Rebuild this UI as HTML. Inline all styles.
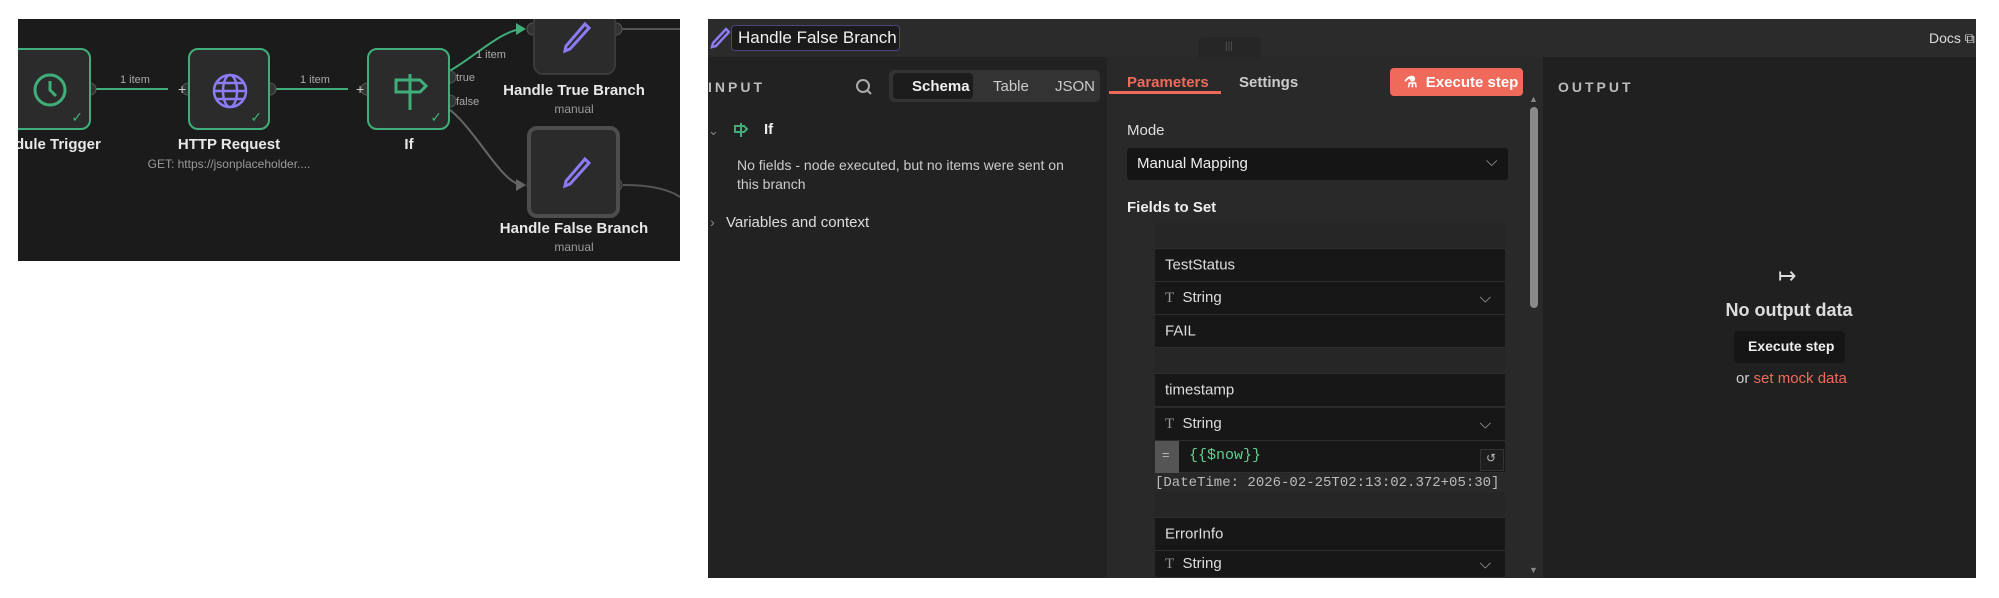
<!DOCTYPE html>
<html><head><meta charset="utf-8"><style>
*{box-sizing:border-box;margin:0;padding:0}
body{width:1999px;height:598px;background:#fff;position:relative;overflow:hidden;font-family:"Liberation Sans",sans-serif;color:#e0e0e0}
.a{position:absolute}
.t{position:absolute;white-space:nowrap}
.node{position:absolute;background:#2b2b2b;border:2px solid #3fae7a;border-radius:10px}
.lbl{position:absolute;font-size:15px;font-weight:bold;color:#e8e8e8;text-align:center;white-space:nowrap;transform:translateX(-50%)}
.sub{position:absolute;font-size:12px;color:#9a9a9a;white-space:nowrap;transform:translateX(-50%)}
.row{position:absolute;left:1155px;width:350px;background:#171717;border-bottom:1px solid #2e2e2e;font-size:15px;color:#ddd}
.row span{position:absolute;left:10px;top:50%;transform:translateY(-50%)}
.chev{position:absolute;right:14px;top:50%;transform:translateY(-50%)}
</style></head><body>

<!-- canvas -->
<div class="a" style="left:18px;top:19px;width:662px;height:242px;background:#1b1b1b;overflow:hidden">
<svg class="a" style="left:0;top:0" width="662" height="242">
 <g fill="none" stroke-width="2">
  <path d="M55 70 H150" stroke="#3fae7a"/>
  <path d="M232 70 H330" stroke="#3fae7a"/>
  <path d="M415 58 C440 55,480 10,505 10" stroke="#3fae7a"/>
  <path d="M415 82 C450 90,480 166,505 166" stroke="#666"/>
  <path d="M600 10 H662" stroke="#555"/>
  <path d="M605 166 C630 166,650 170,662 178" stroke="#555"/>
 </g>
 <path d="M498 4 L508 10 L498 16Z" fill="#3fae7a"/>
 <path d="M498 160 L508 166 L498 172Z" fill="#666"/>
 <g fill="#333" stroke="#555"><circle cx="72" cy="70" r="6"/><circle cx="170" cy="70" r="6"/><circle cx="252" cy="70" r="6"/><circle cx="349" cy="70" r="6"/><circle cx="432" cy="58" r="6"/><circle cx="432" cy="82" r="6"/><circle cx="515" cy="10" r="6"/><circle cx="598" cy="10" r="6"/><circle cx="515" cy="166" r="6"/><circle cx="598" cy="166" r="6"/></g>
 <text x="160" y="75" fill="#ccc" font-size="14" font-family="Liberation Sans">+</text>
 <text x="338" y="75" fill="#ccc" font-size="14" font-family="Liberation Sans">+</text>
 <g fill="#aaa" font-size="11" font-family="Liberation Sans"><text x="102" y="64">1 item</text><text x="282" y="64">1 item</text><text x="458" y="39">1 item</text><text x="438" y="62">true</text><text x="438" y="86">false</text></g>
</svg>
<div class="node" style="left:-10px;top:29px;width:83px;height:82px"><svg class="a" style="left:22px;top:22px" width="36" height="36" fill="none" stroke="#3fae7a" stroke-width="3"><circle cx="18" cy="18" r="15"/><path d="M18 9 V18 L24 24"/></svg><span class="t" style="right:6px;bottom:2px;color:#3fae7a;font-size:14px">✓</span></div>
<div class="node" style="left:170px;top:29px;width:82px;height:82px"><svg class="a" style="left:21px;top:22px" width="38" height="38" fill="none" stroke="#8b7cf6" stroke-width="2.5"><circle cx="19" cy="19" r="16"/><ellipse cx="19" cy="19" rx="7" ry="16"/><path d="M3 19 H35 M6 11 H32 M6 27 H32"/></svg><span class="t" style="right:6px;bottom:2px;color:#3fae7a;font-size:14px">✓</span></div>
<div class="node" style="left:349px;top:29px;width:83px;height:82px"><svg class="a" style="left:23px;top:22px" width="36" height="40" fill="none" stroke="#3fae7a" stroke-width="3"><path d="M18 2 V38 M4 8 H28 L34 14 L28 20 H4Z"/></svg><span class="t" style="right:6px;bottom:2px;color:#3fae7a;font-size:14px">✓</span></div>
<div class="node" style="left:515px;top:-20px;width:83px;height:76px;border-color:#3a3a3a"><svg class="a" style="left:26px;top:20px" width="30" height="34" fill="none" stroke="#8b7cf6" stroke-width="3"><path d="M24 3 L28 7 L9 28 L4 30 L5 25Z"/></svg></div>
<div class="node" style="left:509px;top:107px;width:93px;height:92px;border:4px solid #4d4d4d"><svg class="a" style="left:30px;top:26px" width="30" height="34" fill="none" stroke="#8b7cf6" stroke-width="3"><path d="M24 3 L28 7 L9 28 L4 30 L5 25Z"/></svg></div>
<div class="lbl" style="left:22px;top:117px">Schedule Trigger</div>
<div class="lbl" style="left:211px;top:117px">HTTP Request</div>
<div class="sub" style="left:211px;top:138px">GET: https://jsonplaceholder....</div>
<div class="lbl" style="left:391px;top:117px">If</div>
<div class="lbl" style="left:556px;top:63px">Handle True Branch</div>
<div class="sub" style="left:556px;top:83px">manual</div>
<div class="lbl" style="left:556px;top:201px">Handle False Branch</div>
<div class="sub" style="left:556px;top:221px">manual</div>
</div>

<!-- panel -->
<div class="a" style="left:708px;top:19px;width:1268px;height:559px;background:#222;overflow:hidden">
 <div class="a" style="left:0;top:0;width:1268px;height:38px;background:#2b2b2b"></div>
 <svg class="a" style="left:2px;top:8px" width="20" height="22" fill="none" stroke="#8b7cf6" stroke-width="2.5"><path d="M16 2 L19 5 L6 19 L2 20 L3 16Z"/></svg>
 <div class="a" style="left:23px;top:6px;width:169px;height:26px;border:1px solid #4a4580;border-radius:4px;background:#1a1a1a"></div>
 <div class="t" style="left:30px;top:9px;font-size:17px;color:#f0f0f0">Handle False Branch</div>
 <div class="t" style="left:1221px;top:11px;font-size:14px;color:#ddd">Docs ⧉</div>
 <!-- input -->
 <div class="t" style="left:0;top:60px;font-size:14px;font-weight:bold;letter-spacing:3px;color:#bbb">INPUT</div>
 <svg class="a" style="left:147px;top:59px" width="18" height="18" fill="none" stroke="#aaa" stroke-width="2"><circle cx="8" cy="8" r="6"/><path d="M12.5 12.5 L16 16"/></svg>
 <div class="a" style="left:181px;top:51px;width:211px;height:32px;background:#333;border-radius:5px"></div>
 <div class="a" style="left:185px;top:54px;width:80px;height:26px;background:#1c1c1c;border-radius:4px"></div>
 <div class="t" style="left:204px;top:59px;font-size:15px;font-weight:bold;color:#eee">Schema</div>
 <div class="t" style="left:285px;top:59px;font-size:15px;color:#ccc">Table</div>
 <div class="t" style="left:347px;top:59px;font-size:15px;color:#ccc">JSON</div>
 <div class="t" style="left:0;top:104px;font-size:13px;color:#888">⌄</div>
 <svg class="a" style="left:25px;top:103px" width="16" height="16" fill="none" stroke="#3fae7a" stroke-width="2"><path d="M8 1 V15 M2 4 H11 L14 7 L11 10 H2Z"/></svg>
 <div class="t" style="left:56px;top:102px;font-size:15px;font-weight:bold;color:#eee">If</div>
 <div class="t" style="left:29px;top:137px;font-size:14px;color:#ccc;line-height:19px">No fields - node executed, but no items were sent on<br>this branch</div>
 <div class="t" style="left:2px;top:195px;font-size:14px;color:#888">›</div>
 <div class="t" style="left:18px;top:195px;font-size:15px;color:#ddd">Variables and context</div>
 <!-- middle -->
 <div class="a" style="left:399px;top:38px;width:436px;height:521px;background:#292929"></div>
 <div class="a" style="left:490px;top:18px;width:63px;height:22px;background:#262626;border-radius:4px 4px 0 0"></div>
 <div class="t" style="left:517px;top:22px;font-size:10px;color:#555">|||</div>
 <div class="t" style="left:419px;top:55px;font-size:15px;font-weight:bold;color:#ef6a5a">Parameters</div>
 <div class="a" style="left:401px;top:72px;width:112px;height:3px;background:#ef6a5a"></div>
 <div class="t" style="left:531px;top:55px;font-size:15px;font-weight:bold;color:#ccc">Settings</div>
 <div class="a" style="left:682px;top:49px;width:133px;height:28px;background:#ef6a5a;border-radius:4px"></div>
 <div class="t" style="left:696px;top:54px;font-size:15px;font-weight:bold;color:#fff">⚗&nbsp; Execute step</div>
 <div class="a" style="left:822px;top:88px;width:8px;height:201px;background:#8a8a8a;border-radius:4px"></div>
 <div class="t" style="left:821px;top:75px;font-size:9px;color:#888">▲</div>
 <div class="t" style="left:821px;top:546px;font-size:9px;color:#888">▼</div>
 <div class="t" style="left:419px;top:103px;font-size:15px;color:#ddd">Mode</div>
 <div class="a" style="left:419px;top:129px;width:381px;height:32px;background:#151515;border-radius:3px"></div>
 <div class="t" style="left:429px;top:136px;font-size:15px;color:#eee">Manual Mapping</div>
 <div class="t" style="left:778px;top:134px;font-size:15px;color:#aaa">⌵</div>
 <div class="t" style="left:419px;top:180px;font-size:15px;font-weight:bold;color:#eee">Fields to Set</div>
 <!-- output -->
 <div class="a" style="left:835px;top:38px;width:433px;height:521px;background:#202020"></div>
 <div class="t" style="left:850px;top:60px;font-size:14px;font-weight:bold;letter-spacing:3px;color:#bbb">OUTPUT</div>
 <div class="t" style="left:1070px;top:244px;font-size:22px;color:#ddd">↦</div>
 <div class="t" style="top:281px;font-size:18px;font-weight:bold;color:#ddd;transform:translateX(-50%);left:1081px">No output data</div>
 <div class="a" style="left:1026px;top:312px;width:111px;height:32px;background:#151515;border-radius:4px"></div>
 <div class="t" style="left:1040px;top:319px;font-size:14px;font-weight:bold;color:#eee">Execute step</div>
 <div class="t" style="left:1028px;top:351px;font-size:15px;color:#ccc">or <span style="color:#ef6a5a">set mock data</span></div>
</div>

<!-- fields -->
<div class="row" style="top:223px;height:26px;background:#262626"></div>
<div class="row" style="top:249px;height:33px"><span>TestStatus</span></div>
<div class="row" style="top:282px;height:33px"><span><b style="font-family:'Liberation Serif';color:#999;font-weight:normal">T</b>&nbsp;&nbsp;String</span><i class="chev" style="font-style:normal;color:#aaa">⌵</i></div>
<div class="row" style="top:315px;height:33px"><span>FAIL</span></div>
<div class="row" style="top:348px;height:26px;background:#262626"></div>
<div class="row" style="top:374px;height:33px"><span>timestamp</span></div>
<div class="row" style="top:408px;height:33px"><span><b style="font-family:'Liberation Serif';color:#999;font-weight:normal">T</b>&nbsp;&nbsp;String</span><i class="chev" style="font-style:normal;color:#aaa">⌵</i></div>
<div class="row" style="top:441px;height:32px"></div>
<div class="a" style="left:1155px;top:441px;width:24px;height:32px;background:#555"></div>
<div class="t" style="left:1162px;top:447px;font-size:13px;color:#bbb">=</div>
<div class="t" style="left:1189px;top:447px;font-size:15px;font-family:'Liberation Mono',monospace;color:#5fd08f">{{$now}}</div>
<div class="a" style="left:1480px;top:449px;width:24px;height:22px;background:#1e1e1e;border:1px solid #333"></div>
<div class="t" style="left:1486px;top:451px;font-size:12px;color:#bbb">↺</div>
<div class="t" style="left:1155px;top:475px;font-size:14px;font-family:'Liberation Mono',monospace;color:#bbb">[DateTime: 2026-02-25T02:13:02.372+05:30]</div>
<div class="row" style="top:492px;height:26px;background:#262626"></div>
<div class="row" style="top:518px;height:33px"><span>ErrorInfo</span></div>
<div class="row" style="top:551px;height:27px"><span><b style="font-family:'Liberation Serif';color:#999;font-weight:normal">T</b>&nbsp;&nbsp;String</span><i class="chev" style="font-style:normal;color:#aaa">⌵</i></div>
</body></html>
